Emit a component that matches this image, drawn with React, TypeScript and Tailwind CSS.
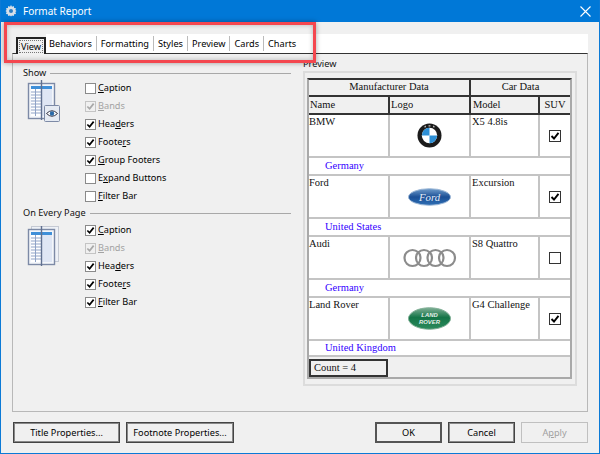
const F = "font-['Noto_Sans',sans-serif]";
const S = "font-['Liberation_Serif',serif]";

function Check({ label, u, checked, disabled }: { label: string; u: number; checked?: boolean; disabled?: boolean }) {
  return (
    <div className={`flex h-[18px] items-center gap-[2px] text-[9.2px] ${disabled ? "text-[#a3a3a3]" : "text-[#000]"}`}>
      <span className={`w-[9px] h-[9px] box-content border ${disabled ? "border-[#c4c4c4] bg-[#f0f0f0]" : "border-[#8a8a8a] bg-white"} flex items-center justify-center shrink-0`}>
        {checked && (
          <svg width="9" height="9" viewBox="0 0 10 10">
            <path d="M1.5 5 L4 7.5 L8.5 1.8" fill="none" stroke={disabled ? "#a8a8a8" : "#000"} strokeWidth="1.9" />
          </svg>
        )}
      </span>
      <span>
        {label.slice(0, u)}
        <u>{label[u]}</u>
        {label.slice(u + 1)}
      </span>
    </div>
  );
}

function Legend({ text }: { text: string }) {
  return (
    <div className="flex items-center gap-[4px] h-[14px] text-[9.2px] text-[#111]">
      <span>{text}</span>
      <span className="flex-1 h-px bg-[#a8a8a8]" />
    </div>
  );
}

function TableIcon({ eye }: { eye?: boolean }) {
  return (
    <svg width="34" height="43" viewBox="0 0 34 43" className="block">
      {!eye && <rect x="4.5" y="0.5" width="27" height="35" fill="#eef1f7" stroke="#c5cad4" />}
      <rect x="1.5" y="3.5" width="26" height="35" fill="#f3f6fb" stroke="#7d8aa6" strokeWidth="1.4" />
      <rect x="4" y="6" width="21" height="3" fill="#3f8fd8" />
      <rect x="4" y="9" width="10" height="27" fill="#fff" />
      <rect x="14" y="9" width="11" height="27" fill="#dfe6f4" />
      {[12, 15, 18, 21, 24, 27, 30, 33].map((y) => (
        <path key={y} d={`M4 ${y}H14`} stroke="#8fa3c7" strokeWidth="1" />
      ))}
      <path d="M8.5 9V36" stroke="#8fa3c7" />
      <path d="M14.5 0V40" stroke="#60708f" strokeWidth="1.4" />
      {eye && (
        <g>
          <rect x="17.5" y="25.5" width="15" height="16" rx="1" fill="#e6ebf3" stroke="#7d8aa6" />
          <path d="M19.5 33.5 Q25 28 30.5 33.5 Q25 39 19.5 33.5Z" fill="#fff" stroke="#334" strokeWidth="1" />
          <circle cx="25" cy="33.5" r="2.2" fill="#2a6aa8" />
        </g>
      )}
    </svg>
  );
}

function Bmw() {
  return (
    <svg width="25" height="25" viewBox="0 0 26 26">
      <circle cx="13" cy="13" r="12.5" fill="#1b1b1b" />
      <circle cx="13" cy="13" r="8" fill="#fff" />
      <path d="M13 13V5A8 8 0 0 0 5 13Z" fill="#2d8fd5" />
      <path d="M13 13V21A8 8 0 0 0 21 13Z" fill="#2d8fd5" />
      <path d="M8 4.5L9 3M12 3h2M17 3l1 1.5" stroke="#ccc" strokeWidth="1.2" />
    </svg>
  );
}

function Ford() {
  return (
    <svg width="43" height="18" viewBox="0 0 44 18">
      <defs>
        <linearGradient id="fordG" x1="0" y1="0" x2="0" y2="1">
          <stop offset="0" stopColor="#6f9ccb" />
          <stop offset="0.5" stopColor="#1b4f96" />
          <stop offset="1" stopColor="#2f6fb4" />
        </linearGradient>
      </defs>
      <ellipse cx="22" cy="9" rx="21.5" ry="8.5" fill="url(#fordG)" stroke="#9db7d6" />
      <text x="22" y="13" textAnchor="middle" fontSize="11" fontStyle="italic" fontFamily="Liberation Serif" fill="#e6eef8">Ford</text>
    </svg>
  );
}

function Audi() {
  return (
    <svg width="54" height="20" viewBox="0 0 54 20">
      {[9.5, 21, 32.5, 44].map((x) => (
        <circle key={x} cx={x} cy="10" r="8" fill="none" stroke="#8c8c8c" strokeWidth="2.2" />
      ))}
    </svg>
  );
}

function Rover() {
  return (
    <svg width="43" height="23" viewBox="0 0 44 23">
      <defs>
        <linearGradient id="roverG" x1="0" y1="0" x2="0" y2="1">
          <stop offset="0" stopColor="#7fae95" />
          <stop offset="0.45" stopColor="#147547" />
          <stop offset="1" stopColor="#2b8a5c" />
        </linearGradient>
      </defs>
      <ellipse cx="22" cy="11.5" rx="21.5" ry="11" fill="url(#roverG)" stroke="#7fae95" />
      <text x="22" y="10" textAnchor="middle" fontSize="6" fontWeight="bold" fontStyle="italic" fontFamily="Liberation Sans" fill="#e8f1ec">LAND</text>
      <text x="22" y="17.5" textAnchor="middle" fontSize="6" fontWeight="bold" fontStyle="italic" fontFamily="Liberation Sans" fill="#e8f1ec">ROVER</text>
    </svg>
  );
}

const rows = [
  { name: "BMW", logo: <Bmw />, model: "X5 4.8is", suv: true, country: "Germany", h: "h-[18px]" },
  { name: "Ford", logo: <Ford />, model: "Excursion", suv: true, country: "United States", h: "h-[18px]" },
  { name: "Audi", logo: <Audi />, model: "S8 Quattro", suv: false, country: "Germany", h: "h-[18px]" },
  { name: "Land Rover", logo: <Rover />, model: "G4 Challenge", suv: true, country: "United Kingdom", h: "h-[16px]" },
];

const GRID = "grid grid-cols-[81px_81px_69px_1fr]";

function Preview() {
  return (
    <div className={`${S} text-[10.5px] text-[#111] ml-[2px] mr-[3px] border-2 border-[#a9a9a9] border-t-[#333] leading-none`}>
      <div className="grid grid-cols-[162px_1fr] h-[17px] border-b-2 border-[#333] bg-[#f0f0f0] text-center">
        <div className="border-r-2 border-[#333] flex items-center justify-center">Manufacturer Data</div>
        <div className="flex items-center justify-center">Car Data</div>
      </div>
      <div className={`${GRID} h-[18px] border-b-2 border-[#333] bg-[#f0f0f0]`}>
        <div className="border-r-2 border-[#333] flex items-center pl-[1px]">Name</div>
        <div className="border-r-2 border-[#333] flex items-center pl-[1px]">Logo</div>
        <div className="border-r-2 border-[#333] flex items-center pl-[2px]">Model</div>
        <div className="flex items-center justify-center">SUV</div>
      </div>
      {rows.map((r) => (
        <div key={r.name} className="bg-white">
          <div className={`${GRID} h-[43px] border-b-2 border-[#c4c4c4]`}>
            <div className="border-r-2 border-[#c4c4c4] pt-[2px]">{r.name}</div>
            <div className="border-r-2 border-[#c4c4c4] flex items-center justify-center">{r.logo}</div>
            <div className="border-r-2 border-[#c4c4c4] pl-[1px] pt-[2px]">{r.model}</div>
            <div className="flex items-center justify-center">
              <span className="w-[12px] h-[12px] border-[1.5px] border-[#333] flex items-center justify-center">
                {r.suv && (
                  <svg width="10" height="10" viewBox="0 0 10 10" className="shrink-0">
                    <path d="M1.5 5 L4 7.5 L8.5 1.8" fill="none" stroke="#000" strokeWidth="1.9" />
                  </svg>
                )}
              </span>
            </div>
          </div>
          <div className={`${r.h} border-b-2 border-[#c4c4c4] pl-[16px] flex items-center text-[#3300ff]`}>{r.country}</div>
        </div>
      ))}
      <div className="h-[20px] bg-[#f0f0f0] pt-[2px]">
        <div className="w-[79px] h-[18px] border-2 border-[#333] flex items-center pl-[3px]">Count = 4</div>
      </div>
    </div>
  );
}

function Btn({ children, w, disabled, dflt }: { children: React.ReactNode; w: string; disabled?: boolean; dflt?: boolean }) {
  return (
    <div className={`${w} h-[21px] flex items-center justify-center whitespace-nowrap text-[9.2px] ${disabled ? "border border-[#c0c0c0] text-[#a0a0a0]" : dflt ? "border-2 border-[#555] text-[#000]" : "border border-[#444] text-[#000] shadow-[inset_0_0_0_1px_#888]"}`}>
      {children}
    </div>
  );
}

const tabs = ["Behaviors", "Formatting", "Styles", "Preview", "Cards", "Charts"];

export default function App() {
  return (
    <div className={`${F} relative w-[600px] h-[454px] bg-[#f0f0f0] border-x border-b border-[#0b7ad6] flex flex-col overflow-hidden`}>
      <div className="h-[22px] -mx-px bg-[#0078d7] text-white flex items-center pl-[5px] pr-[9px] text-[10px] shrink-0">
        <svg width="12" height="12" viewBox="0 0 12 12" className="mr-[6px]">
          <path d="M6 0.5l1 1.6 1.8-.6.3 1.9 1.9.3-.6 1.8 1.1 1-1.1 1 .6 1.8-1.9.3-.3 1.9-1.8-.6-1 1.1-1-1.1-1.8.6-.3-1.9-1.9-.3.6-1.8-1.1-1 1.1-1-.6-1.8 1.9-.3.3-1.9 1.8.6z" fill="#d6dfe8" transform="translate(0 -.4)" />
          <circle cx="6" cy="6" r="2" fill="#2d7fc4" />
        </svg>
        <span className="flex-1">Format Report</span>
        <svg width="11" height="11" viewBox="0 0 11 11"><path d="M0.5 0.5L10.5 10.5M10.5 0.5L0.5 10.5" stroke="#fff" strokeWidth="1.1" /></svg>
      </div>

      <div className="flex-1 flex flex-col pl-[11px] pr-[11px] pt-[12px]">
        <div className="flex items-end h-[19px] text-[9.2px] text-[#000] pl-[4px]">
          <div className="h-[17px] w-[30px] border-2 border-b-0 border-[#222] flex items-center justify-center bg-[#f0f0f0] relative -mb-px z-10 shrink-0">
            <span className="outline-1 outline-dotted outline-[#777] px-px leading-[11px]">View</span>
          </div>
          <div className="flex-1 h-[19px] bg-white flex items-center pl-[3px]">
            {tabs.map((t, i) => (
              <div key={t} className={`h-[15px] flex items-center pr-[4px] ${i ? "border-l border-[#bbb] pl-[4px]" : ""}`}>{t}</div>
            ))}
          </div>
        </div>
        <div className="h-[359px] border border-[#b8b8b8] border-t-[#333] flex pt-[12px] pl-[10px]">
          <div className="w-[268px] shrink-0">
            <Legend text="Show" />
            <div className="flex">
              <div className="w-[62px] pl-[4px]"><TableIcon eye /></div>
              <div className="-mt-px">
                <Check label="Caption" u={0} />
                <Check label="Bands" u={0} checked disabled />
                <Check label="Headers" u={3} checked />
                <Check label="Footers" u={5} checked />
                <Check label="Group Footers" u={0} checked />
                <Check label="Expand Buttons" u={1} />
                <Check label="Filter Bar" u={0} />
              </div>
            </div>
            <div className="mt-[1px]"><Legend text="On Every Page" /></div>
            <div className="flex mt-[1px]">
              <div className="w-[62px] pl-[4px] pt-[5px]"><TableIcon /></div>
              <div>
                <Check label="Caption" u={0} checked />
                <Check label="Bands" u={0} checked disabled />
                <Check label="Headers" u={3} checked />
                <Check label="Footers" u={5} checked />
                <Check label="Filter Bar" u={0} checked />
              </div>
            </div>
          </div>
          <div className="ml-[12px] w-[274px] shrink-0 text-[9.2px] -mt-[8px]">
            <div className="h-[13px] leading-[12px] text-[#111]">Preview</div>
            <div className="h-[315px] border-2 border-[#dcdcdc] pt-[5px]">
              <Preview />
            </div>
          </div>
        </div>
        <div className="flex mt-[10px] pl-[1px]">
          <Btn w="w-[107px]">Title Properties...</Btn>
          <div className="w-[6px]" />
          <Btn w="w-[108px]">Footnote Properties...</Btn>
          <div className="flex-1" />
          <Btn w="w-[67px]" dflt>OK</Btn>
          <div className="w-[6px]" />
          <Btn w="w-[67px]">Cancel</Btn>
          <div className="w-[6px]" />
          <Btn w="w-[67px]" disabled><span>A<u>p</u>ply</span></Btn>
        </div>
      </div>

      <div className="absolute left-[3px] top-[22px] w-[312px] h-[41px] border-[3px] border-[#f4474f] shadow-[0_0_5px_rgba(0,0,0,0.35),inset_0_0_5px_rgba(0,0,0,0.25)]" />
    </div>
  );
}
